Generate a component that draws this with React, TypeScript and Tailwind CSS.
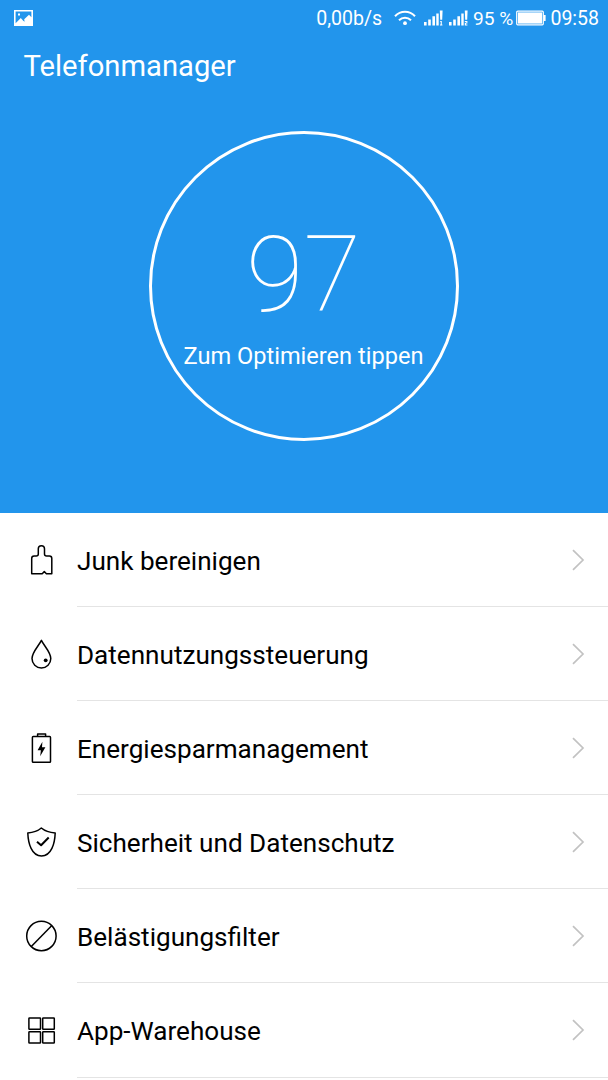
import type { ReactNode } from "react"

const items: { label: string; icon: ReactNode }[] = [
  {
    label: "Junk bereinigen",
    icon: (
      <path d="M6.7 30.7V15.4Q6.7 13 9.1 13H11.2Q13.3 13 13.3 11V5.8A3.1 3.1 0 0 1 19.5 5.8V11Q19.5 13 21.6 13H24.4Q26.8 13 26.8 15.4V30.7H21.4L19.3 28.6L17.2 30.7Z" />
    ),
  },
  {
    label: "Datennutzungssteuerung",
    icon: (
      <>
        <path d="M16.4 3.4C13.6 9.2 7 15.2 7 21.6A9.4 9.4 0 0 0 25.8 21.6C25.8 15.2 19.2 9.2 16.4 3.4Z" />
        <circle cx="20.7" cy="23.3" r="1.9" fill="currentColor" stroke="none" />
      </>
    ),
  },
  {
    label: "Energiesparmanagement",
    icon: (
      <>
        <rect x="7.4" y="5.6" width="18.1" height="25.6" rx="0.8" />
        <path d="M12.6 5V3.1H20.6V5" />
        <path d="M17.4 10.8L12.6 19.3H15.9L15.2 25.2L20.4 16.3H17Z" fill="currentColor" stroke="none" />
      </>
    ),
  },
  {
    label: "Sicherheit und Datenschutz",
    icon: (
      <>
        <path d="M16.3 3C13 5.8 8 7.6 2.8 8C3.2 18.5 6.6 31 16.5 31C26.4 31 29.8 18.5 30.2 8C25 7.6 19.6 5.8 16.3 3Z" />
        <path d="M12 16.7L16.1 20.2L23.7 12.5" strokeWidth="2" />
      </>
    ),
  },
  {
    label: "Belästigungsfilter",
    icon: (
      <>
        <circle cx="16.4" cy="17" r="14.7" />
        <path d="M26.6 6.8L6.3 27.6" />
      </>
    ),
  },
  {
    label: "App-Warehouse",
    icon: (
      <>
        <rect x="3.9" y="4.9" width="11.6" height="11.4" rx="0.6" />
        <rect x="17.7" y="4.9" width="11.6" height="11.4" rx="0.6" />
        <rect x="3.9" y="18.7" width="11.6" height="11.4" rx="0.6" />
        <rect x="17.7" y="18.7" width="11.6" height="11.4" rx="0.6" />
      </>
    ),
  },
]

function Signal({ sim }: { sim: 1 | 2 }) {
  return (
    <svg className="h-4 w-[19px]" viewBox="0 0 19 16" fill="currentColor">
      <path d="M0 12H2.6V15.5H0ZM4.2 9.5H6.8V15.5H4.2ZM8.4 6.3H11V15.5H8.4ZM12.3 3.4H14.7V15.5H12.3ZM15.8 0.5H18.6L18.2 9.8H16.2Z" />
      {sim === 1 ? (
        <path d="M16.2 11H17.8V14.5H18.4V15.5H16V14.5H16.7V12H16.2Z" />
      ) : (
        <path d="M15.8 11H18.4V13.6H17V14.5H18.4V15.5H15.8V12.8H17.3V12H15.8Z" />
      )}
    </svg>
  )
}

function StatusBar() {
  return (
    <div className="flex h-9 items-center pl-[14px] pr-[9px] text-[19.5px] leading-9">
      <svg className="h-4 w-[19px]" viewBox="0 0 19 16">
        <path
          fill="currentColor"
          fillRule="evenodd"
          d="M0 0H19V16H0ZM1.6 1.6V13.2L6.8 8L9.2 10.8L10.6 11.8L10.2 9.2L15 4.8L17.4 7.2V1.6ZM4 3.6H6V5.4H4Z"
        />
      </svg>
      <span className="ml-auto pt-px">0,00b/s</span>
      <svg className="ml-3 h-4 w-[22px]" viewBox="0 0 22 16" fill="none" stroke="currentColor" strokeWidth="2">
        <path d="M1 6.2C6.6 0.2 15.4 0.2 21 6.2" />
        <path d="M5 10.2C8.4 6.8 13.6 6.8 17 10.2" />
        <circle cx="11" cy="13.2" r="1.9" fill="currentColor" stroke="none" />
      </svg>
      <div className="ml-2 flex gap-[6px]">
        <Signal sim={1} />
        <Signal sim={2} />
      </div>
      <span className="ml-[5px] pt-px text-[19.2px]">95 %</span>
      <svg className="ml-[3px] h-4 w-[30px]" viewBox="0 0 30 16">
        <rect x="0.7" y="1.2" width="26.6" height="13.6" rx="1" fill="none" stroke="currentColor" strokeWidth="1.2" />
        <rect x="1.9" y="2.4" width="24.2" height="11.2" fill="currentColor" />
        <rect x="27.6" y="5" width="2" height="6" fill="currentColor" />
      </svg>
      <span className="ml-1 pt-px">09:58</span>
    </div>
  )
}

export default function App() {
  return (
    <div className="h-[1080px] w-[608px] overflow-hidden bg-white font-['Roboto',sans-serif]">
      <header className="flex h-[513px] flex-col bg-[#2295ec] text-white">
        <StatusBar />
        <h1 className="pl-[23.5px] text-[29.2px] leading-[61px]">Telefonmanager</h1>
        <button className="mt-[34px] ml-[148.5px] flex h-[310px] w-[310px] flex-col items-center rounded-full border-[3px] border-white pt-[87px]">
          <span className="text-[105px] leading-[110px] font-thin">97</span>
          <span className="mt-[9px] text-[23.6px] leading-8 whitespace-nowrap">Zum Optimieren tippen</span>
        </button>
      </header>

      <ul>
        {items.map((item) => (
          <li key={item.label} className="flex h-[94.1px] pl-[25px]">
            <svg
              className="mt-[30px] h-[33px] w-[33px] shrink-0"
              viewBox="0 0 33 33"
              fill="none"
              stroke="currentColor"
              strokeWidth="1.5"
              strokeLinejoin="round"
            >
              {item.icon}
            </svg>
            <div className="ml-[19px] flex flex-1 items-center justify-between border-b border-[#e4e4e4] pr-[23px]">
              <span className="pt-1 text-[26.1px] text-black">{item.label}</span>
              <svg className="h-[22px] w-[13px]" viewBox="0 0 13 22" fill="none" stroke="#c2c2c2" strokeWidth="1.7">
                <path d="M1 1.2L11 11L1 20.8" />
              </svg>
            </div>
          </li>
        ))}
      </ul>
    </div>
  )
}
